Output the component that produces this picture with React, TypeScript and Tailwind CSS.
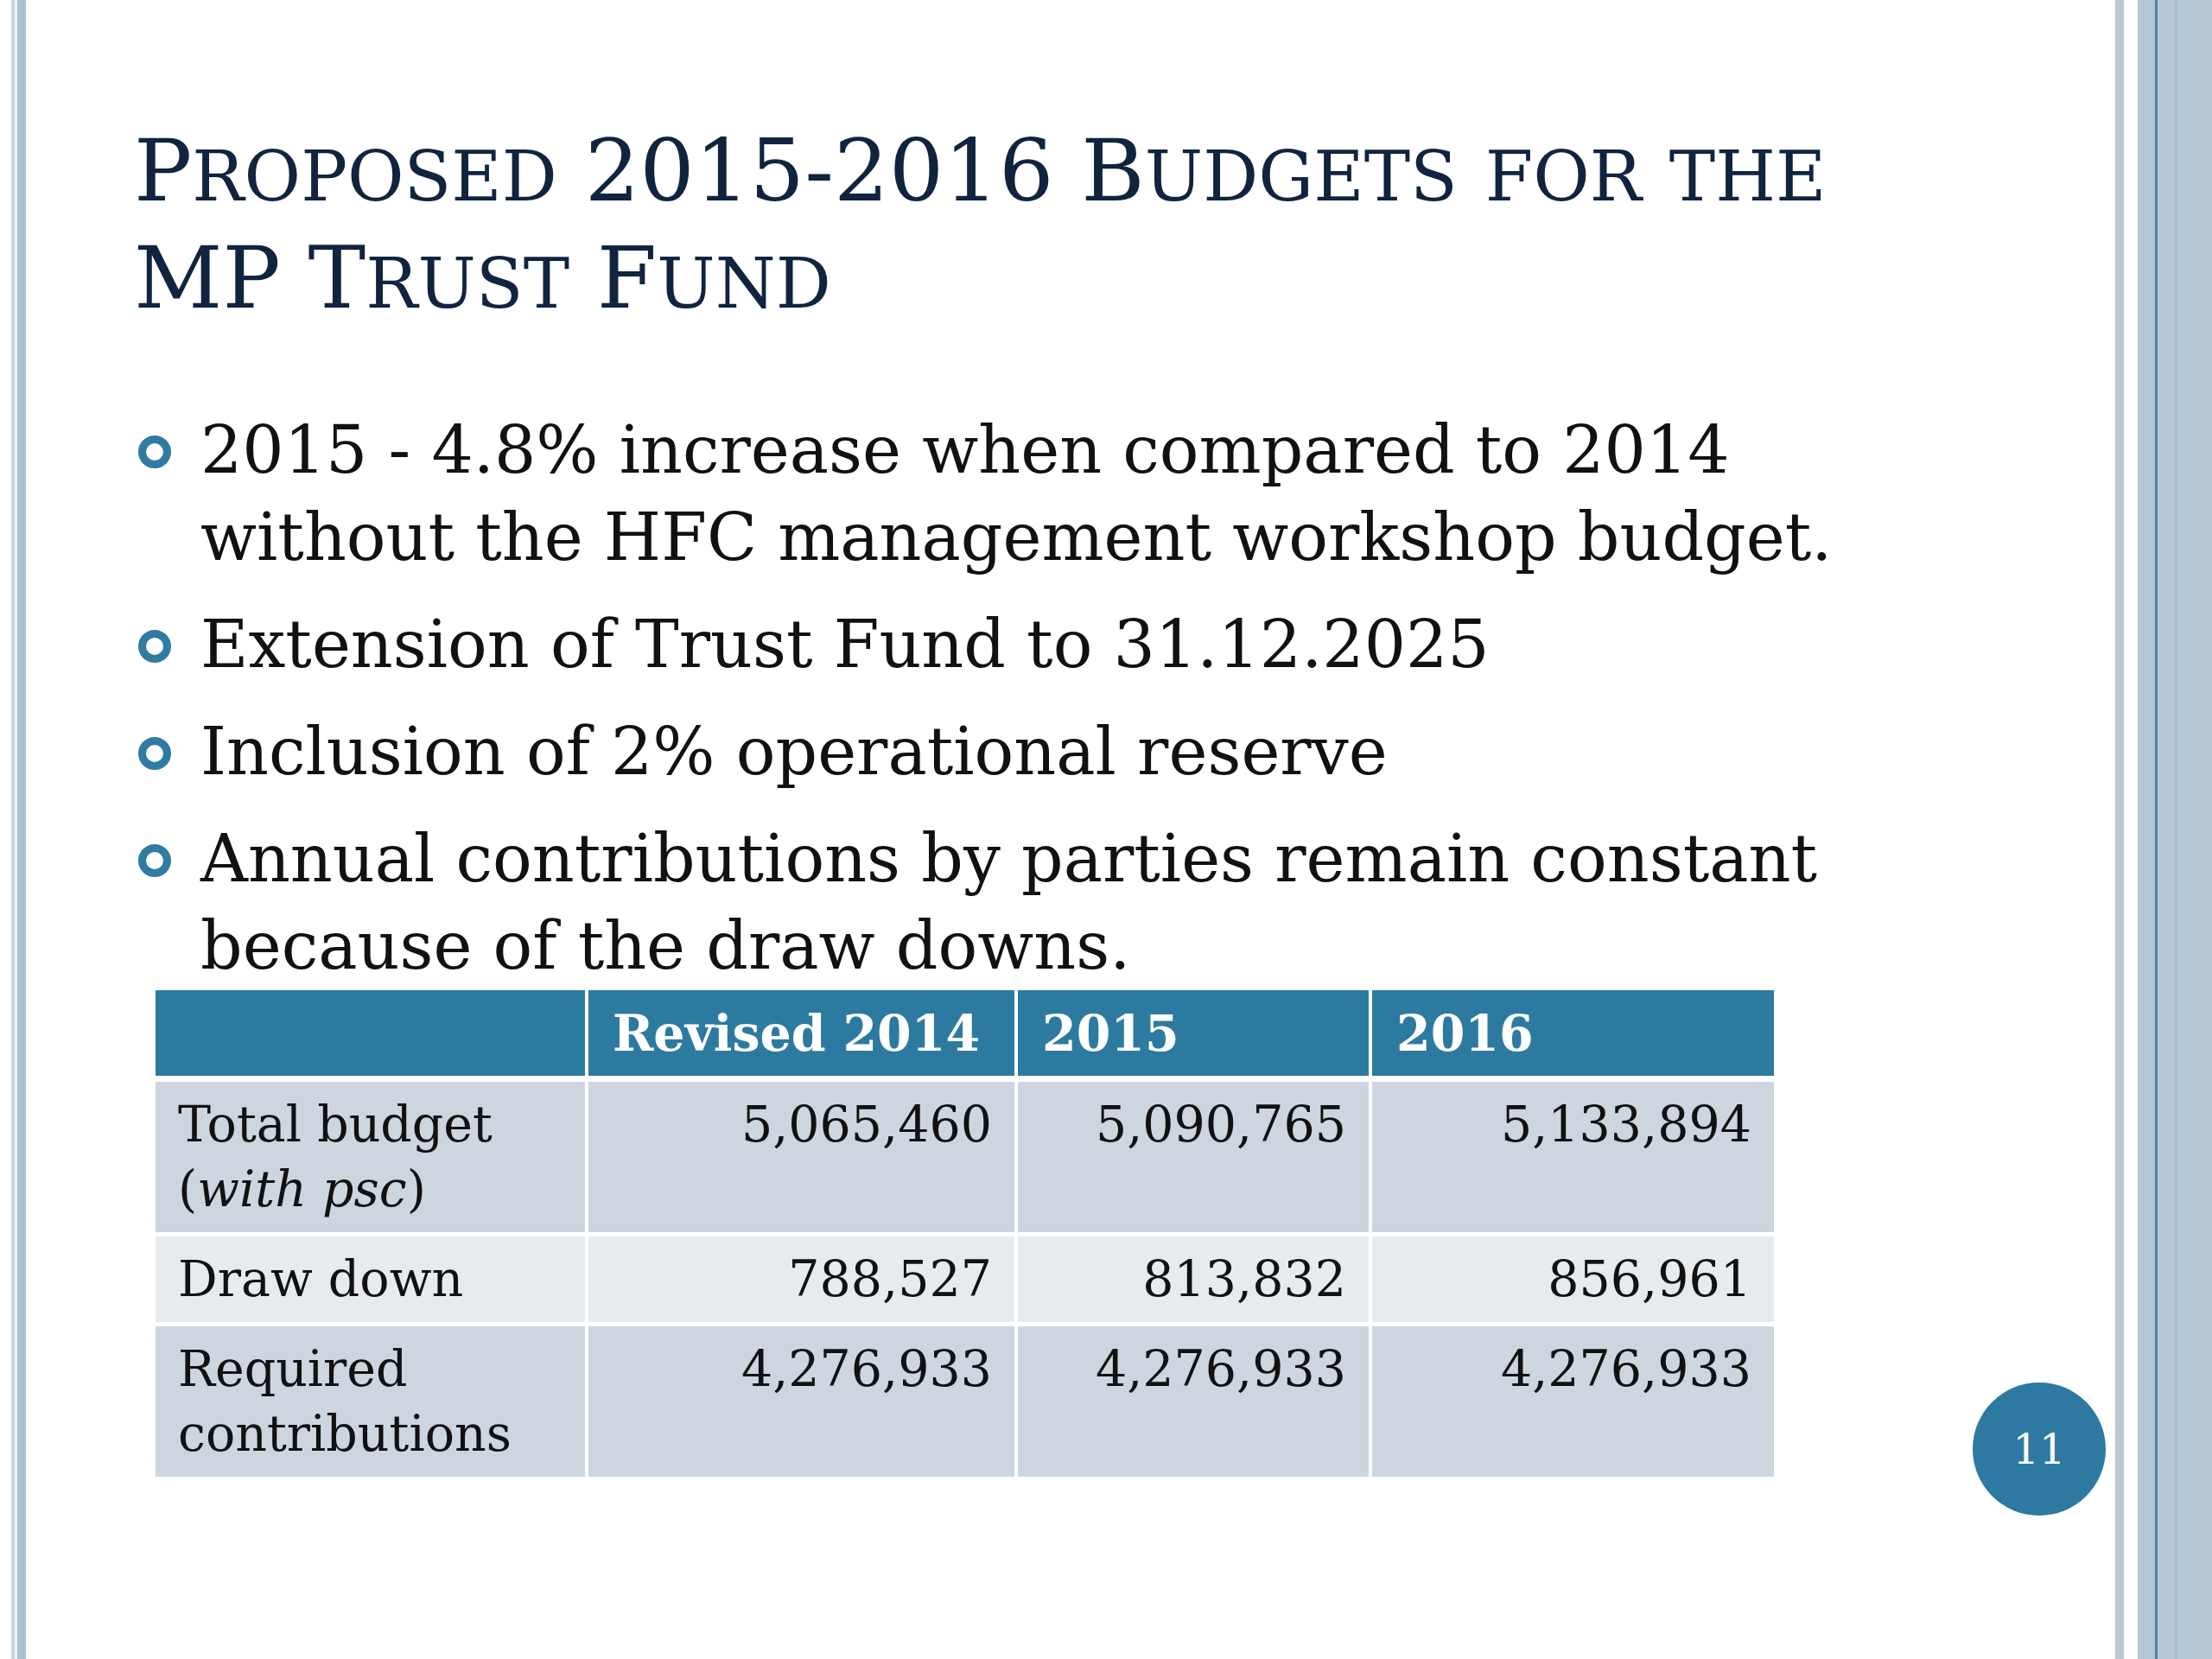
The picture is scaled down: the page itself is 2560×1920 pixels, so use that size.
import * as React from "react";

const serif = "font-['DejaVu_Serif',serif]";

function SmallCaps({ text }: { text: string }) {
  return (
    <>
      {text.split("").map((ch, i) =>
        /[a-z]/.test(ch) ? (
          <span key={i} className="text-[0.8em] leading-none">
            {ch.toUpperCase()}
          </span>
        ) : (
          <React.Fragment key={i}>{ch}</React.Fragment>
        )
      )}
    </>
  );
}

const bullets: string[][] = [
  ["2015 - 4.8% increase when compared to 2014", "without the HFC management workshop budget."],
  ["Extension of Trust Fund to 31.12.2025"],
  ["Inclusion of 2% operational reserve"],
  ["Annual contributions by parties remain constant", "because of the draw downs."],
];

const rows = [
  { label: ["Total budget", "(with psc)"], values: ["5,065,460", "5,090,765", "5,133,894"], light: false },
  { label: ["Draw down"], values: ["788,527", "813,832", "856,961"], light: true },
  { label: ["Required", "contributions"], values: ["4,276,933", "4,276,933", "4,276,933"], light: false },
];

export default function App() {
  return (
    <div className={`relative flex w-[2560px] h-[1920px] bg-white overflow-hidden ${serif}`}>
      {/* Left frame lines */}
      <div className="flex h-full w-[30px] shrink-0">
        <div className="w-[13px] bg-white" />
        <div className="w-[4px] bg-[#c9d6e1]" />
        <div className="w-[3px] bg-[#eef2f6]" />
        <div className="w-[10px] bg-[#a9c1d4]" />
      </div>

      {/* Slide content */}
      <div className="flex-1 flex flex-col">
        <h1 className="pl-[125px] mt-[136px] text-[100px] leading-[124px] text-[#10243f] font-normal">
          <div>
            <SmallCaps text="Proposed 2015-2016 Budgets for the" />
          </div>
          <div>
            <SmallCaps text="MP Trust Fund" />
          </div>
        </h1>

        <ul className="mt-[86px] pl-[130px] flex flex-col gap-[23px] text-[76px] leading-[101px] text-[#111111]">
          {bullets.map((lines, i) => (
            <li key={i} className="flex items-start">
              <span className="mt-[34px] w-[38px] h-[38px] shrink-0 rounded-full border-[9px] border-[#2f7ba2]" />
              <span className="ml-[34px]">
                {lines.map((l, j) => (
                  <div key={j}>{l}</div>
                ))}
              </span>
            </li>
          ))}
        </ul>

        <div className="mt-[1px] ml-[150px] w-[1873px] grid grid-cols-[497px_493px_406px_465px] gap-x-[4px] text-[57px] leading-[75px]">
          <div className="bg-[#2d7aa1] py-[12px]" />
          {["Revised 2014", "2015", "2016"].map((h) => (
            <div key={h} className="bg-[#2d7aa1] py-[12px] px-[28px] text-white font-bold">
              {h}
            </div>
          ))}

          {rows.map((r, i) => (
            <React.Fragment key={i}>
              <div
                className={`${i === 0 ? "mt-[7px]" : "mt-[5px]"} ${r.light ? "bg-[#e8ebee]" : "bg-[#cdd6df]"} py-[12px] px-[26px] text-[#111111]`}
              >
                {r.label[0] === "Total budget" ? (
                  <>
                    <div>Total budget</div>
                    <div>
                      (<i>with psc</i>)
                    </div>
                  </>
                ) : (
                  r.label.map((l) => <div key={l}>{l}</div>)
                )}
              </div>
              {r.values.map((v, j) => (
                <div
                  key={j}
                  className={`${i === 0 ? "mt-[7px]" : "mt-[5px]"} ${r.light ? "bg-[#e8ebee]" : "bg-[#cdd6df]"} py-[12px] px-[26px] text-right text-[#111111] ${r.label.length === 2 ? "min-h-[174px]" : ""}`}
                >
                  {v}
                </div>
              ))}
            </React.Fragment>
          ))}
        </div>
      </div>

      {/* Right frame stripes */}
      <div className="flex h-full w-[112px] shrink-0">
        <div className="w-[10px] bg-[#b8c8d5]" />
        <div className="w-[16px] bg-white" />
        <div className="w-[20px] bg-[#b5c7d6]" />
        <div className="w-[3px] bg-[#4f84ab]" />
        <div className="w-[20px] bg-[#b5c7d6]" />
        <div className="w-[3px] bg-[#a8bbcb]" />
        <div className="flex-1 bg-[#b6c7d5]" />
      </div>

      {/* Slide number */}
      <div className="absolute left-[2283px] top-[1600px] w-[154px] h-[154px] rounded-full bg-[#2d79a1] flex items-center justify-center text-white text-[48px]">
        11
      </div>
    </div>
  );
}
